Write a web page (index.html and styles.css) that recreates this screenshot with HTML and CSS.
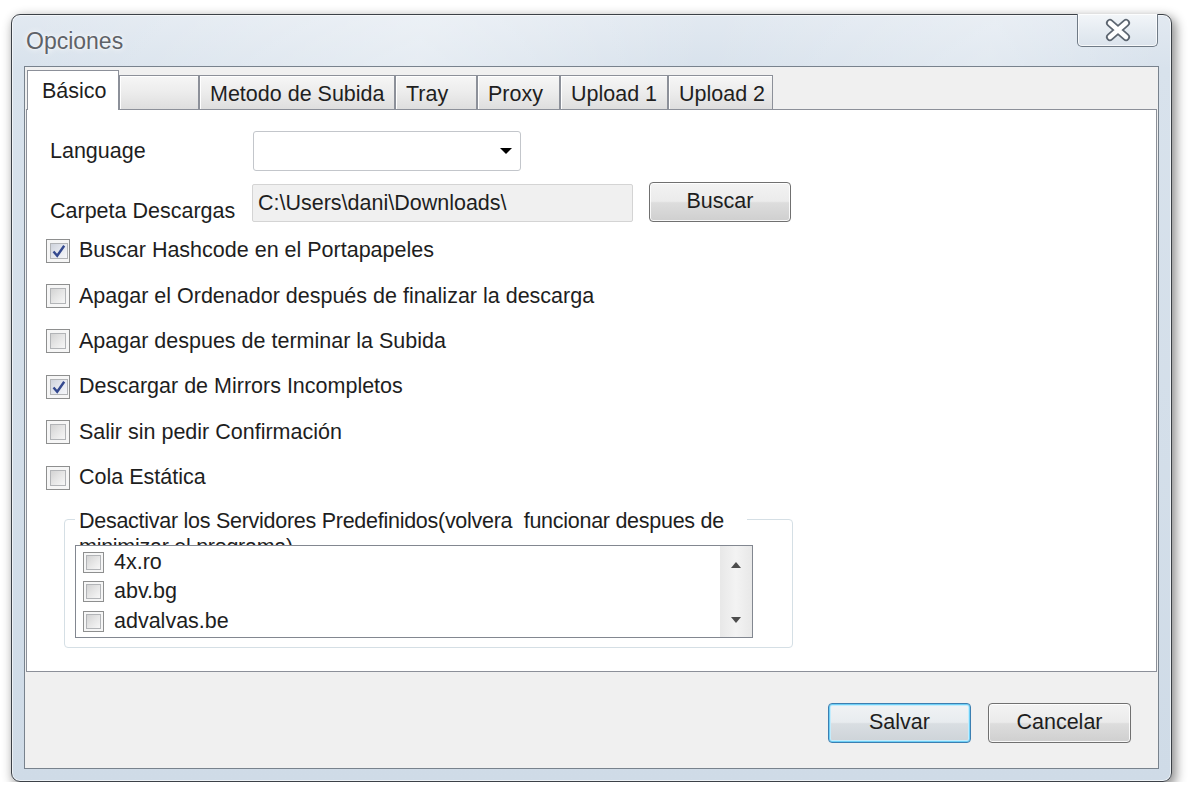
FILE: index.html
```html
<!DOCTYPE html>
<html lang="es">
<head>
<meta charset="utf-8">
<title>Opciones</title>
<link rel="stylesheet" href="styles.css">
</head>
<body>
<div class="window">
  <div class="titlebar">
    <span class="title">Opciones</span>
    <div class="close-btn">
      <svg width="30" height="24" viewBox="0 0 30 24">
        <path d="M7 5 L23 19 M23 5 L7 19" stroke="#5c6570" stroke-width="8" stroke-linecap="round" fill="none"/>
        <path d="M7 5 L23 19 M23 5 L7 19" stroke="#ffffff" stroke-width="4.5" stroke-linecap="round" fill="none"/>
      </svg>
    </div>
  </div>
  <div class="client">
    <div class="tabs">
      <div class="tab active w-basico">Básico</div>
      <div class="tab w-blank"></div>
      <div class="tab w-metodo">Metodo de Subida</div>
      <div class="tab w-tray">Tray</div>
      <div class="tab w-proxy">Proxy</div>
      <div class="tab w-up1">Upload 1</div>
      <div class="tab w-up2">Upload 2</div>
    </div>
    <div class="panel">
      <div class="row row-lang">
        <span class="field-label">Language</span>
        <div class="combo"><span class="combo-arrow"></span></div>
      </div>
      <div class="row row-folder">
        <span class="field-label label-low">Carpeta Descargas</span>
        <div class="textbox">C:\Users\dani\Downloads\</div>
        <div class="btn btn-buscar">Buscar</div>
      </div>
      <div class="checks">
        <div class="check-row">
          <span class="cb checked"><span class="cb-in"><svg width="16" height="16" viewBox="0 0 16 16"><path d="M2.5 8.5 L6.2 12.8 L13.2 2.8" stroke="#34498f" stroke-width="2.4" fill="none"/></svg></span></span>
          <span>Buscar Hashcode en el Portapapeles</span>
        </div>
        <div class="check-row">
          <span class="cb"><span class="cb-in"></span></span>
          <span>Apagar el Ordenador después de finalizar la descarga</span>
        </div>
        <div class="check-row">
          <span class="cb"><span class="cb-in"></span></span>
          <span>Apagar despues de terminar la Subida</span>
        </div>
        <div class="check-row">
          <span class="cb checked"><span class="cb-in"><svg width="16" height="16" viewBox="0 0 16 16"><path d="M2.5 8.5 L6.2 12.8 L13.2 2.8" stroke="#34498f" stroke-width="2.4" fill="none"/></svg></span></span>
          <span>Descargar de Mirrors Incompletos</span>
        </div>
        <div class="check-row">
          <span class="cb"><span class="cb-in"></span></span>
          <span>Salir sin pedir Confirmación</span>
        </div>
        <div class="check-row">
          <span class="cb"><span class="cb-in"></span></span>
          <span>Cola Estática</span>
        </div>
      </div>
      <div class="group">
        <div class="group-label">Desactivar los Servidores Predefinidos(volvera&nbsp; funcionar despues de minimizar el programa)</div>
        <div class="listbox">
          <div class="list-items">
            <div class="list-item"><span class="cb small"><span class="cb-in"></span></span><span>4x.ro</span></div>
            <div class="list-item"><span class="cb small"><span class="cb-in"></span></span><span>abv.bg</span></div>
            <div class="list-item"><span class="cb small"><span class="cb-in"></span></span><span>advalvas.be</span></div>
          </div>
          <div class="scrollbar">
            <span class="arrow-up"></span>
            <span class="arrow-down"></span>
          </div>
        </div>
      </div>
    </div>
    <div class="footer">
      <div class="btn btn-default">Salvar</div>
      <div class="btn">Cancelar</div>
    </div>
  </div>
</div>
</body>
</html>
```

FILE: styles.css
```css
html, body {
  margin: 0;
  background: #ffffff;
}
body {
  padding: 14px 0 0 11px;
  font-family: "Liberation Sans", Arial, sans-serif;
  font-size: 21.5px;
  color: #1e1e1e;
}

.window {
  width: 1161px;
  height: 768px;
  box-sizing: border-box;
  border: 1px solid #3c4147;
  border-radius: 9px;
  background: linear-gradient(180deg, #e2e9f1 0%, #d8e2ec 7%, #cfdbe7 100%);
  box-shadow: 3px 4px 11px 1px rgba(0, 0, 0, 0.45), inset 0 0 0 1px rgba(255, 255, 255, 0.6);
  padding: 0 12px 12px 12px;
  display: flex;
  flex-direction: column;
}

.titlebar {
  height: 51px;
  flex: none;
  display: flex;
  justify-content: space-between;
  align-items: flex-start;
  background: linear-gradient(100deg, rgba(255,255,255,0) 0%, rgba(255,255,255,0.35) 35%, rgba(255,255,255,0) 60%, rgba(255,255,255,0.25) 85%, rgba(255,255,255,0) 100%);
}
.title {
  margin: 13px 0 0 2px;
  font-size: 23px;
  line-height: 26px;
  color: #5e6268;
  text-shadow: 0 0 6px #ffffff, 0 0 2px #ffffff;
}
.close-btn {
  width: 81px;
  height: 33px;
  box-sizing: border-box;
  margin: -1px 1px 0 0;
  border: 1px solid #6f7a86;
  border-top: none;
  border-radius: 0 0 5px 5px;
  background: linear-gradient(180deg, #f3f6f9 0%, #e6ecf2 50%, #dbe3ec 100%);
  box-shadow: inset 0 0 0 1px rgba(255, 255, 255, 0.75);
  display: flex;
  align-items: center;
  justify-content: center;
}

.client {
  flex: 1;
  border: 1px solid #78828d;
  background: #f0f0f0;
  display: flex;
  flex-direction: column;
}

.tabs {
  height: 42px;
  flex: none;
  display: flex;
  align-items: flex-end;
  padding-left: 2px;
}
.tab {
  height: 34px;
  box-sizing: border-box;
  border: 1px solid #8c9099;
  border-bottom: none;
  background: linear-gradient(180deg, #f6f6f6 0%, #ececec 50%, #dedede 100%);
  box-shadow: inset 1px 1px 0 #ffffff;
  padding: 3px 0 0 10px;
  line-height: 30px;
  white-space: nowrap;
  color: #1f1f1f;
}
.tab.active {
  height: 40px;
  background: #ffffff;
  box-shadow: none;
  margin-bottom: -1px;
  position: relative;
  z-index: 1;
  padding: 1px 0 0 14px;
  line-height: 38px;
}
.w-basico { width: 92px; }
.w-blank { width: 80px; }
.w-metodo { width: 196px; }
.w-tray { width: 82px; }
.w-proxy { width: 83px; }
.w-up1 { width: 108px; }
.w-up2 { width: 105px; }

.panel {
  height: 563px;
  flex: none;
  box-sizing: border-box;
  margin: 0 1px;
  border: 1px solid #8c9099;
  background: #ffffff;
}

.row {
  display: flex;
  padding-left: 23px;
  height: 40px;
}
.row-lang {
  margin-top: 21px;
  align-items: center;
}
.row-folder {
  margin-top: 11px;
  align-items: flex-end;
}
.field-label {
  width: 203px;
  flex: none;
  line-height: 24px;
}
.label-low {
  width: 202px;
  margin-bottom: -1px;
}

.combo {
  width: 268px;
  height: 40px;
  box-sizing: border-box;
  border: 1px solid #c3c6cb;
  border-radius: 3px;
  background: #ffffff;
  display: flex;
  justify-content: flex-end;
  align-items: center;
  padding-right: 8px;
}
.combo-arrow {
  width: 0;
  height: 0;
  border-left: 6.5px solid transparent;
  border-right: 6.5px solid transparent;
  border-top: 6.5px solid #000000;
}

.textbox {
  width: 381px;
  height: 38px;
  box-sizing: border-box;
  border: 1px solid #d4d4d4;
  border-radius: 2px;
  background: #f0f0f0;
  padding-left: 5px;
  line-height: 36px;
  white-space: nowrap;
}

.btn {
  width: 143px;
  height: 40px;
  box-sizing: border-box;
  border: 1px solid #707070;
  border-radius: 4px;
  background: linear-gradient(180deg, #f3f3f3 0%, #ebebeb 48%, #dddddd 52%, #cfcfcf 100%);
  box-shadow: inset 0 0 0 1px rgba(255, 255, 255, 0.85);
  text-align: center;
  line-height: 37px;
  color: #1e1e1e;
}
.btn-buscar {
  width: 142px;
  margin-left: 16px;
}
.btn-default {
  border-color: #3c7fb1;
  box-shadow: inset 0 0 0 1px #6ecff6, inset 0 0 0 2px #c4ecfc;
  background: linear-gradient(180deg, #f0f3f5 0%, #e8ecef 48%, #d9dee2 52%, #cdd3d8 100%);
}

.checks {
  margin-top: 6px;
  padding-left: 19px;
}
.check-row {
  height: 45.4px;
  display: flex;
  align-items: center;
  gap: 9px;
  white-space: nowrap;
}

.cb {
  width: 24px;
  height: 24px;
  flex: none;
  box-sizing: border-box;
  border: 1px solid #8e8f8f;
  background: #f6f6f6;
  padding: 3px;
  display: flex;
}
.cb-in {
  flex: 1;
  border: 1px solid #b2b4b7;
  background: linear-gradient(135deg, #d3d3d3 0%, #e6e6e6 50%, #f7f7f7 100%);
  display: flex;
  align-items: center;
  justify-content: center;
}
.cb.checked .cb-in {
  background: linear-gradient(135deg, #cfd3dc 0%, #e4e7ee 50%, #f6f7fa 100%);
}
.cb.small {
  width: 21px;
  height: 21px;
  padding: 2px;
}

.group {
  margin: 19px 0 0 37px;
  width: 729px;
  height: 129px;
  box-sizing: border-box;
  border: 1px solid #d5dfe5;
  border-radius: 4px;
  position: relative;
  padding: 25px 0 0 10px;
}
.group-label {
  position: absolute;
  top: -12px;
  left: 10px;
  width: 664px;
  height: 37px;
  overflow: hidden;
  padding: 0 4px;
  background: #ffffff;
  line-height: 26px;
  letter-spacing: -0.27px;
}

.listbox {
  position: relative;
  z-index: 1;
  width: 678px;
  height: 93px;
  box-sizing: border-box;
  border: 1px solid #828790;
  background: #ffffff;
  display: flex;
}
.list-items {
  flex: 1;
  padding: 1px 0 0 7px;
}
.list-item {
  height: 29.5px;
  display: flex;
  align-items: center;
  gap: 10px;
}

.scrollbar {
  width: 32px;
  flex: none;
  box-sizing: border-box;
  background: linear-gradient(90deg, #e8e8e8 0%, #f3f3f3 50%, #e8e8e8 100%);
  display: flex;
  flex-direction: column;
  justify-content: space-between;
  align-items: center;
  padding: 16px 0 14px;
}
.arrow-up {
  width: 0;
  height: 0;
  border-left: 5.5px solid transparent;
  border-right: 5.5px solid transparent;
  border-bottom: 6px solid #4d4d4d;
}
.arrow-down {
  width: 0;
  height: 0;
  border-left: 5.5px solid transparent;
  border-right: 5.5px solid transparent;
  border-top: 6px solid #4d4d4d;
}

.footer {
  flex: 1;
  display: flex;
  justify-content: flex-end;
  align-items: flex-start;
  gap: 17px;
  padding: 31px 27px 0 0;
}
```
